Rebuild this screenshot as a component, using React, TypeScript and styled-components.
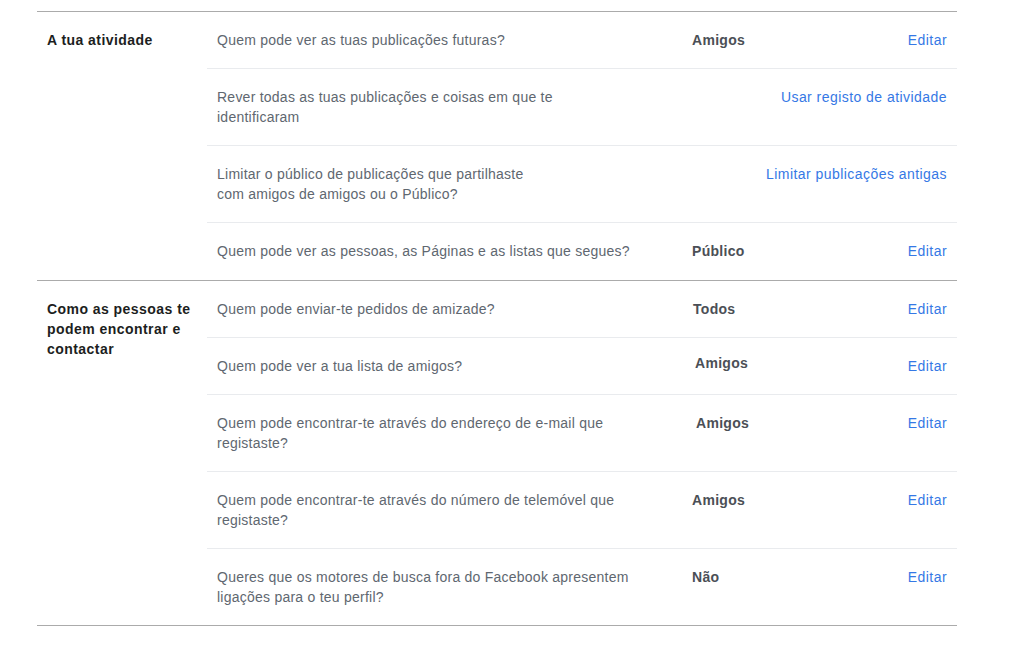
import React from "react";
import styled, { createGlobalStyle } from "styled-components";

interface Setting {
  question: React.ReactNode;
  value?: string;
  action: string;
  nudge?: { x: number; y: number };
}

interface Section {
  title: string;
  rows: Setting[];
}

const sections: Section[] = [
  {
    title: "A tua atividade",
    rows: [
      { question: "Quem pode ver as tuas publicações futuras?", value: "Amigos", action: "Editar" },
      {
        question: (
          <>
            Rever todas as tuas publicações e coisas em que te
            <br />
            identificaram
          </>
        ),
        action: "Usar registo de atividade",
      },
      {
        question: (
          <>
            Limitar o público de publicações que partilhaste
            <br />
            com amigos de amigos ou o Público?
          </>
        ),
        action: "Limitar publicações antigas",
      },
      {
        question: "Quem pode ver as pessoas, as Páginas e as listas que segues?",
        value: "Público",
        action: "Editar",
      },
    ],
  },
  {
    title: "Como as pessoas te podem encontrar e contactar",
    rows: [
      { question: "Quem pode enviar-te pedidos de amizade?", value: "Todos", action: "Editar", nudge: { x: 1, y: 0 } },
      { question: "Quem pode ver a tua lista de amigos?", value: "Amigos", action: "Editar", nudge: { x: 3, y: -3 } },
      {
        question: "Quem pode encontrar-te através do endereço de e-mail que registaste?",
        value: "Amigos",
        action: "Editar",
        nudge: { x: 4, y: 0 },
      },
      {
        question: "Quem pode encontrar-te através do número de telemóvel que registaste?",
        value: "Amigos",
        action: "Editar",
      },
      {
        question: "Queres que os motores de busca fora do Facebook apresentem ligações para o teu perfil?",
        value: "Não",
        action: "Editar",
      },
    ],
  },
];

const GlobalStyle = createGlobalStyle`
  html, body {
    margin: 0;
    background: #ffffff;
  }
  body {
    font-family: "Liberation Sans", Arial, sans-serif;
    font-size: 14px;
  }
`;

const Page = styled.div`
  width: 920px;
  margin: 11px 0 0 37px;
  border-bottom: 1px solid #ababab;
`;

const SectionBlock = styled.section`
  display: flex;
  border-top: 1px solid #ababab;
  &:first-child {
    padding-bottom: 1px;
  }
`;

const SectionTitle = styled.h3`
  width: 150px;
  flex: none;
  margin: 0;
  padding: 18px 10px 0;
  font-size: 14px;
  line-height: 20px;
  font-weight: bold;
  letter-spacing: 0.45px;
  color: #1c1e21;
`;

const Rows = styled.div`
  flex: 1;
  display: flex;
  flex-direction: column;
`;

const Row = styled.div`
  display: grid;
  grid-template-columns: 445px 1fr auto;
  column-gap: 30px;
  align-items: start;
  padding: 18px 10px;
  line-height: 20px;
  & + & {
    border-top: 1px solid #e9ebee;
  }
`;

const Question = styled.div`
  color: #606770;
  letter-spacing: 0.24px;
`;

const Value = styled.div<{ $dx: number; $dy: number }>`
  font-weight: bold;
  color: #4b4f56;
  letter-spacing: 0.3px;
  transform: translate(${({ $dx }) => $dx}px, ${({ $dy }) => $dy}px);
`;

const Action = styled.a`
  grid-column: 3;
  color: #3578e5;
  letter-spacing: 0.45px;
  text-decoration: none;
  cursor: pointer;
  white-space: nowrap;
`;

export default function App() {
  return (
    <>
      <GlobalStyle />
      <Page>
        {sections.map((section) => (
          <SectionBlock key={section.title}>
            <SectionTitle>{section.title}</SectionTitle>
            <Rows>
              {section.rows.map((row, i) => (
                <Row key={i}>
                  <Question>{row.question}</Question>
                  {row.value && (
                    <Value $dx={row.nudge?.x ?? 0} $dy={row.nudge?.y ?? 0}>
                      {row.value}
                    </Value>
                  )}
                  <Action>{row.action}</Action>
                </Row>
              ))}
            </Rows>
          </SectionBlock>
        ))}
      </Page>
    </>
  );
}
